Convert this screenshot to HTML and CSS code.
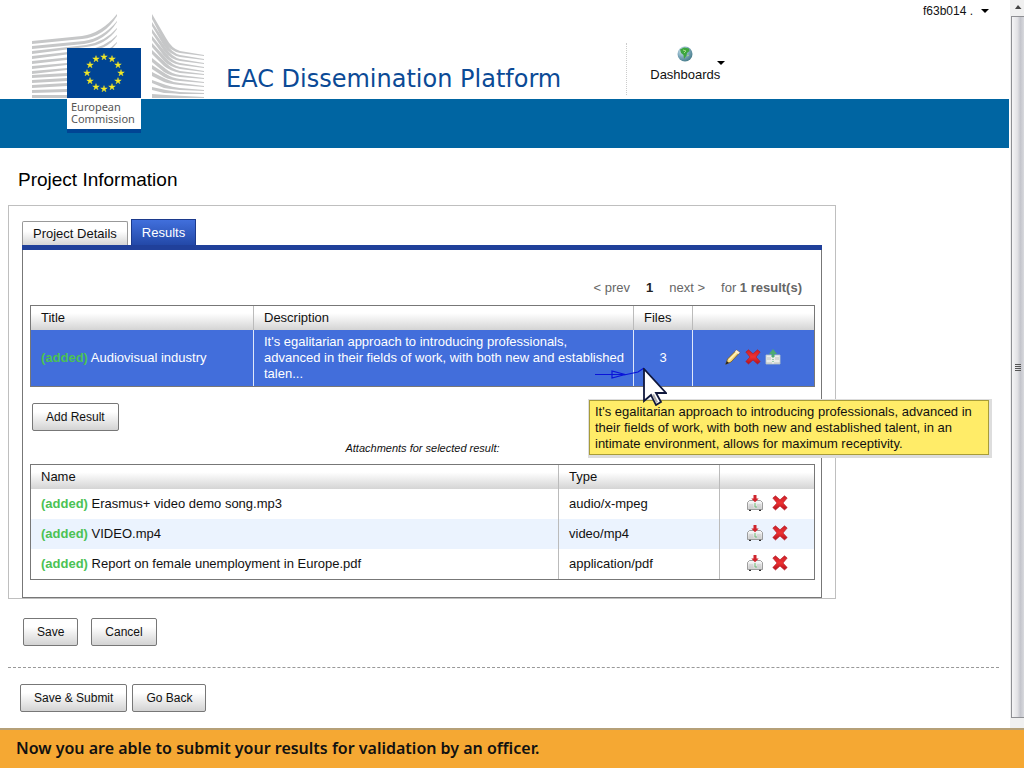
FILE: index.html
```html
<!DOCTYPE html>
<html lang="en">
<head>
<meta charset="utf-8">
<title>EAC Dissemination Platform</title>
<link rel="stylesheet" href="styles.css">
</head>
<body>
<svg class="defs" aria-hidden="true">
  <defs>
    <linearGradient id="red" x1="0" y1="0" x2="0" y2="1"><stop offset="0" stop-color="#c8202a"/><stop offset=".5" stop-color="#f03232"/><stop offset="1" stop-color="#b0101c"/></linearGradient>
    <linearGradient id="steel" x1="0" y1="0" x2="0" y2="1"><stop offset="0" stop-color="#fbfbfb"/><stop offset="1" stop-color="#cfcfcf"/></linearGradient>
    <radialGradient id="sea" cx=".35" cy=".3" r=".8"><stop offset="0" stop-color="#d8ecf2"/><stop offset=".5" stop-color="#7fa9bd"/><stop offset="1" stop-color="#3c7480"/></radialGradient>
    <symbol id="cross" viewBox="0 0 16 16"><path d="M.8 3 3.500.8 8 4.800 12.500.8 15.200 3 11 8l4.200 4.500L12.500 15 8 11 3.500 15 .8 12.500 5 8z" fill="url(#red)" stroke="#b41822" stroke-width=".6"/></symbol>
    <symbol id="drive" viewBox="0 0 16 16"><path d="M2 14h2v2H2zM12 14h2v2h-2z" fill="#333"/><path d="M2.500 5.500h11l2 2v7H.5v-7z" fill="url(#steel)" stroke="#888" stroke-width=".8"/><path d="M3 9v4M5 9v4M11 9v4M13 9v4" stroke="#c4c4c4" stroke-width=".8"/><path d="M8 8v2M7 11h2v2" stroke="#6fbe78" fill="none"/><path d="M6.500 0h3v3.500h2.200L8 7.200 4.300 3.500h2.200z" fill="#d0242c"/></symbol>
    <symbol id="upload" viewBox="0 0 16 16"><path d="M1 6h14v9H1z" fill="#e9ece9" stroke="#b9c6c9" stroke-width=".8"/><path d="M1 14h6M9 14h6M3 8v3M5 8v3M11 8v3M13 8v3" stroke="#b4bab4" stroke-width=".8"/><path d="M8 0l4 5H9.500v3h-3V5H4z" fill="#4daa72"/><path d="M8 8v6" stroke="#4daa72" stroke-dasharray="1 1"/></symbol>
    <symbol id="pencil" viewBox="0 0 16 16"><path d="M.8 15.200 2.500 10 11.500 1l3.300 2.500L6 13z" fill="#f7d878" stroke="#6e5425" stroke-width=".8"/><path d="M4 11l8.500-8.500" stroke="#fff3bd" stroke-width="1.500"/><path d="M11.500 1l3.300 2.500-1.500 1.600L10 2.600z" fill="#f8eedb"/><path d="M.5 15.500 1.800 12 4 14z" fill="#222"/></symbol>
  </defs>
</svg>

<div class="window">
  <div class="page">
    <header class="header">
      <svg class="logo" viewBox="0 0 172 119" role="img" aria-label="European Commission">
        <g fill="#c6c7c8">
          <path d="M0 27 50 22Q70 19 85 0v2Q72 23 50 25L0 30z"/>
          <path d="M0 32 52 27Q71 24 85 7v1Q73 27 52 30L0 35z"/>
          <path d="M0 37 54 31Q73 28 85 14v1Q74 31 54 33L0 40z"/>
          <path d="M0 42 54 36Q74 33 85 21v1Q75 36 54 38L0 45z"/>
          <path d="M0 47 60 41Q76 38 85 28v1Q77 41 60 43L0 50z"/>
          <path d="M0 52l35-3v2L0 55zM0 57l35-3v2L0 60zM0 61l35-2v3L0 64zM0 66l35-2v3L0 69zM0 71l35-2v3L0 74zM0 76l35-1v3L0 79zM0 81h35v3H0z"/>
          <path d="M120 0 134 24Q140 35 148 37L172 41v1L148 39Q138 37 132 28L120 5z"/>
          <path d="M120 8 134 29Q140 39 148 41L172 45v1L148 43Q138 41 132 32L120 12z"/>
          <path d="M120 15 134 34Q140 43 148 45L172 49v1L148 47Q138 45 132 37L120 19z"/>
          <path d="M120 22 134 39Q140 47 148 49L172 53v1L148 51Q138 49 132 42L120 26z"/>
          <path d="M120 29 134 44Q140 51 148 53L172 57v1L148 55Q138 53 132 47L120 33z"/>
          <path d="M120 36 134 49Q140 55 148 57L172 60v1L148 59Q138 57 132 52L120 40z"/>
          <path d="M120 44 134 55Q140 60 148 61L172 64v1L148 63Q138 62 132 58L120 48z"/>
          <path d="M120 51 134 60Q140 64 148 65L172 68v1L148 67Q138 66 132 63L120 55z"/>
          <path d="M120 58 134 65Q140 68 148 69L172 72v1L148 71Q138 70 132 68L120 62z"/>
          <path d="M120 66 134 71Q140 73 148 74L172 76v1L148 76Q138 75 132 74L120 69z"/>
          <path d="M120 73 134 76Q140 77 148 78L172 79v1L148 80Q138 79 132 79L120 76z"/>
          <path d="M120 80 134 81 172 83v1H120z"/>
        </g>
        <path d="M35 34h74v50H35z" fill="#004494"/>
        <path d="M35 84h74v31H35z" fill="#fff"/>
        <path d="M35 115h74v4H35z" fill="#004494"/>
        <defs><path id="star" d="M0-3.400.8-1.100H3.300L1.300.4 2 2.800 0 1.300-2 2.800-1.300.4-3.300-1.100H-.8z"/></defs>
        <g fill="#f4ea26" stroke="#f4ea26" stroke-width=".4" transform="translate(72 59)">
          <use href="#star" y="-16"/><use href="#star" x="8" y="-14"/><use href="#star" x="14" y="-8"/><use href="#star" x="17"/><use href="#star" x="14" y="8"/><use href="#star" x="8" y="14"/><use href="#star" y="16"/><use href="#star" x="-8" y="14"/><use href="#star" x="-14" y="8"/><use href="#star" x="-17"/><use href="#star" x="-14" y="-8"/><use href="#star" x="-8" y="-14"/>
        </g>
        <text class="logo-text"><tspan x="39" y="97">European</tspan> <tspan x="39" y="109">Commission</tspan></text>
      </svg>
      <h1 class="site-title">EAC Dissemination Platform</h1>
      <nav class="nav">
        <button class="nav-item" type="button">
          <span class="nav-label">
            <svg class="globe" viewBox="0 0 16 16" aria-hidden="true"><circle cx="8" cy="8" r="7.500" fill="url(#sea)"/><path d="M3 3.500 7 1.500l5 1 .5 2.500L10 7 9.500 9.500 7 13 6.500 9 4 7z" fill="#3da63f"/><path d="M6 4l3 1-2 2M10 10l2-1" stroke="#a4dc8b" fill="none"/></svg>
            Dashboards
          </span>
          <svg class="caret" viewBox="0 0 8 4" aria-hidden="true"><path d="M0 0h8L4 4z"/></svg>
        </button>
      </nav>
      <button class="user" type="button">f63b014 . <svg class="caret" viewBox="0 0 8 4" aria-hidden="true"><path d="M0 0h8L4 4z"/></svg></button>
    </header>

    <main class="main">
      <h2 class="heading">Project Information</h2>
      <section class="panel">
        <div class="tabs" role="tablist">
          <button class="tab" role="tab" type="button">Project Details</button>
          <button class="tab active" role="tab" type="button" aria-selected="true">Results</button>
        </div>
        <div class="tab-body">
          <div class="pager">
            <a href="#prev">&lt; prev</a><b class="current">1</b><a href="#next">next &gt;</a><span>for <b>1 result(s)</b></span>
          </div>
          <table class="grid results">
            <colgroup><col class="c-title"><col class="c-desc"><col class="c-files"><col></colgroup>
            <thead><tr><th>Title</th><th>Description</th><th>Files</th><th></th></tr></thead>
            <tbody>
              <tr class="selected">
                <td><b class="added">(added)</b> Audiovisual industry</td>
                <td class="description">It's egalitarian approach to introducing professionals,<br>advanced in their fields of work, with both new and established talen...</td>
                <td class="files">3
                  <svg class="trail" viewBox="0 0 50 14" aria-hidden="true"><path d="M0 7.500H29M17 4v7l13-3.500zM29 8 43 5l6-4" fill="none" stroke="#0a14d8" stroke-width="1.200"/></svg>
                  <div class="tooltip" role="tooltip">It's egalitarian approach to introducing professionals, advanced in their fields of work, with both new and established talent, in an intimate environment, allows for maximum receptivity.</div>
                  <svg class="pointer" viewBox="0 0 24 38" aria-hidden="true"><path d="M1 1v32l7-6 5 10 5-3-5-9h10z" fill="#fff" stroke="#10183c" stroke-width="1.800"/><path d="M9 27l2-1 4 8-2 1z" fill="#aaa"/></svg>
                </td>
                <td><div class="actions">
                  <button type="button" aria-label="Edit"><svg><use href="#pencil"/></svg></button>
                  <button type="button" aria-label="Delete"><svg><use href="#cross"/></svg></button>
                  <button type="button" aria-label="Upload"><svg><use href="#upload"/></svg></button>
                </div></td>
              </tr>
            </tbody>
          </table>
          <button class="btn add" type="button">Add Result</button>
          <p class="caption">Attachments for selected result:</p>
          <table class="grid attachments">
            <colgroup><col class="c-name"><col class="c-type"><col></colgroup>
            <thead><tr><th>Name</th><th>Type</th><th></th></tr></thead>
            <tbody>
              <tr><td><b class="added">(added)</b> Erasmus+ video demo song.mp3</td><td>audio/x-mpeg</td><td><div class="actions wide"><button type="button" aria-label="Download"><svg><use href="#drive"/></svg></button><button type="button" aria-label="Delete"><svg><use href="#cross"/></svg></button></div></td></tr>
              <tr><td><b class="added">(added)</b> VIDEO.mp4</td><td>video/mp4</td><td><div class="actions wide"><button type="button" aria-label="Download"><svg><use href="#drive"/></svg></button><button type="button" aria-label="Delete"><svg><use href="#cross"/></svg></button></div></td></tr>
              <tr><td><b class="added">(added)</b> Report on female unemployment in Europe.pdf</td><td>application/pdf</td><td><div class="actions wide"><button type="button" aria-label="Download"><svg><use href="#drive"/></svg></button><button type="button" aria-label="Delete"><svg><use href="#cross"/></svg></button></div></td></tr>
            </tbody>
          </table>
        </div>
      </section>
      <div class="form-actions">
        <button class="btn" type="button">Save</button>
        <button class="btn" type="button">Cancel</button>
      </div>
      <div class="page-actions">
        <button class="btn" type="button">Save &amp; Submit</button>
        <button class="btn" type="button">Go Back</button>
      </div>
    </main>
  </div>
  <div class="scrollbar" aria-hidden="true">
    <svg class="scroll-up" viewBox="0 0 13 16"><path d="M4 9l3-4 3.500 4z" fill="#444"/></svg>
    <div class="thumb"><i></i><i></i><i></i><i></i></div>
  </div>
</div>
<footer class="banner">Now you are able to submit your results for validation by an officer.</footer>
</body>
</html>
```
FILE: styles.css
```css
* { box-sizing: border-box; }

body {
  margin: 0;
  min-height: 100vh;
  display: flex;
  flex-direction: column;
  font: 13px/16px "Liberation Sans", Arial, sans-serif;
  color: #111;
  background: #fff;
}

button { font: inherit; color: inherit; padding: 0; border: 0; background: none; cursor: pointer; }
svg { display: block; }
.defs { position: absolute; width: 0; height: 0; }

.window { flex: 1; display: flex; }
.page { flex: 1; min-width: 0; }

/* Header */
.header {
  display: flex;
  align-items: flex-start;
  height: 148px;
  padding: 0 20px 0 32px;
  background: linear-gradient(#fff 99px, #0065a2 99px);
}
.logo { width: 172px; height: 119px; margin-top: 14px; }
.logo-text { font: 11px "Noto Sans", sans-serif; fill: #555; }
.site-title {
  margin: 64px 0 0 22px;
  font: 24px/30px "DejaVu Sans", Verdana, sans-serif;
  color: #0b4a96;
  white-space: nowrap;
}
.nav {
  height: 52px;
  margin: 43px 0 0 65px;
  padding-left: 23px;
  border-left: 1px dotted #ccc;
}
.nav-item { display: flex; align-items: center; }
.nav-label { display: flex; flex-direction: column; align-items: center; gap: 5px; padding-top: 3px; }
.globe { width: 16px; height: 16px; }
.caret { width: 8px; height: 4px; }
.nav .caret { margin-left: -3px; }
.user { display: flex; align-items: center; gap: 8px; margin: 3px 0 0 auto; font-size: 12px; }

/* Content */
.main { padding: 21px 10px 16px 8px; }
.heading { margin: 0 0 15px 10px; font-size: 19px; font-weight: 400; line-height: 21px; color: #000; }
.panel { max-width: 828px; padding: 13px 13px 0; border: 1px solid #bfbfbf; }

.tabs { display: flex; align-items: flex-end; gap: 3px; border-bottom: 5px solid #20409a; }
.tab {
  height: 24px;
  padding: 0 10px;
  border: 1px solid #999;
  border-bottom: 0;
  border-radius: 2px 2px 0 0;
  background: linear-gradient(#fff 40%, #d6d6d6);
}
.tab.active {
  height: 26px;
  border-color: #1c3a8c;
  border-radius: 0;
  color: #fff;
  background: linear-gradient(#416fdc, #2349a8);
}
.tab-body { padding: 30px 6px 17px 7px; border: 1px solid #777; border-top: 0; }

.pager { display: flex; justify-content: flex-end; gap: 16px; padding-right: 13px; margin-bottom: 9px; color: #666; }
.pager a { color: inherit; text-decoration: none; }
.pager .current { color: #222; }

.grid { width: 100%; table-layout: fixed; border-collapse: separate; border-spacing: 0; border: 1px solid #777; }
.grid th {
  height: 24px;
  padding: 0 10px;
  font-weight: 400;
  text-align: left;
  border-left: 1px solid #bbb;
  background: linear-gradient(#fff 30%, #d4d4d4);
}
.grid td { height: 30px; padding: 0 10px; border-left: 1px solid #bbb; }
.grid th:first-child, .grid td:first-child { border-left: 0; }
.attachments tbody tr:nth-child(even) { background: #ebf3fe; }
.grid .selected { color: #fff; background: #426edb; }
.grid .selected td { height: 56px; border-color: #dfe7fa; }
.grid .selected .description { padding-right: 4px; }
.grid .selected .files { position: relative; text-align: center; }
.c-title { width: 222px; }
.c-desc { width: 380px; }
.c-files { width: 59px; }
.c-name { width: 527px; }
.c-type { width: 161px; }
.added { color: #4bc254; }

.actions { display: flex; justify-content: center; gap: 4px; padding: 0 2px 3px 0; }
.actions svg { width: 16px; height: 16px; }
.actions.wide { gap: 9px; padding: 0 0 2px; }

.trail { position: absolute; left: -39px; bottom: 5px; width: 50px; height: 14px; }
.pointer { position: absolute; left: 9px; top: 38px; width: 24px; height: 38px; }
.tooltip {
  position: absolute;
  left: -45px;
  top: 70px;
  width: 400px;
  padding: 3px 5px 2px;
  border: 1px solid #a89c38;
  background: #ffec68;
  box-shadow: 1px 1px 0 2px #ddd;
  color: #111;
  text-align: left;
}

.btn {
  height: 28px;
  padding: 0 13px;
  border: 1px solid #777;
  border-radius: 2px;
  font-size: 12px;
  background: linear-gradient(#fff 30%, #d3d3d3);
}
.add { margin: 16px 0 0 2px; }
.caption { margin: 9px 0 8px; font-size: 11px; font-style: italic; text-align: center; }

.form-actions { display: flex; gap: 13px; padding: 19px 15px 21px; border-bottom: 1px dashed #999; }
.page-actions { display: flex; gap: 5px; padding: 16px 12px 0; }

/* Scrollbar */
.scrollbar { width: 15px; display: flex; flex-direction: column; padding: 0 0 10px 1px; background: #f0f0f0; border-left: 1px solid #fff; }
.scroll-up { width: 13px; height: 16px; }
.thumb {
  flex: 1;
  display: flex;
  flex-direction: column;
  align-items: center;
  justify-content: center;
  gap: 1px;
  border: 1px solid #8e8f93;
  border-right: 0;
  background: linear-gradient(90deg, #f5f5f6, #e2e2e5 45%, #c4c5cc 70%, #d8d9dd);
}
.thumb i { width: 6px; height: 1px; background: #555; }

.banner {
  padding: 7px 16px 8px;
  border-top: 2px solid #b5a078;
  font: 600 16px/23px "Noto Sans", sans-serif;
  background: #f5a833;
}
```
